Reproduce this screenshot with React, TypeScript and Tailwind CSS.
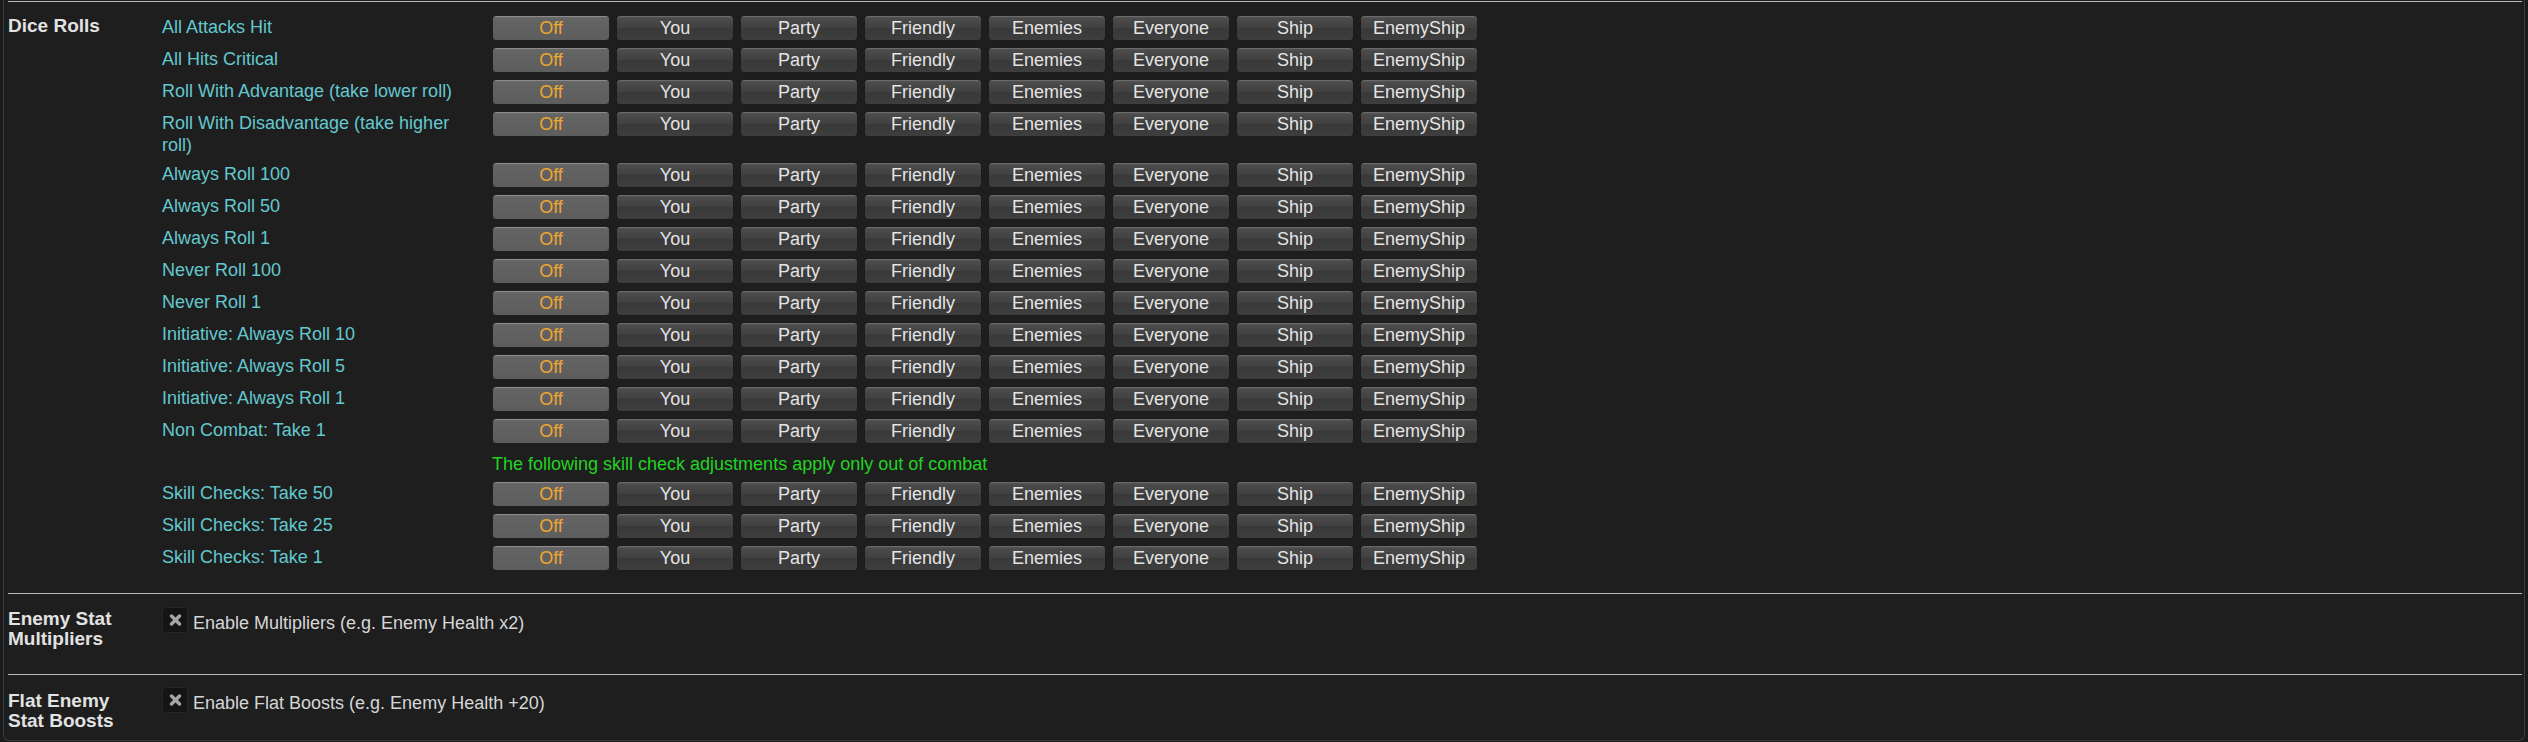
import React, { useState } from 'react';

const OPTIONS = ['Off', 'You', 'Party', 'Friendly', 'Enemies', 'Everyone', 'Ship', 'EnemyShip'];

const DICE_ROWS = [
    'All Attacks Hit',
    'All Hits Critical',
    'Roll With Advantage (take lower roll)',
    'Roll With Disadvantage (take higher roll)',
    'Always Roll 100',
    'Always Roll 50',
    'Always Roll 1',
    'Never Roll 100',
    'Never Roll 1',
    'Initiative: Always Roll 10',
    'Initiative: Always Roll 5',
    'Initiative: Always Roll 1',
    'Non Combat: Take 1',
];

const SKILL_ROWS = ['Skill Checks: Take 50', 'Skill Checks: Take 25', 'Skill Checks: Take 1'];

const Divider: React.FC = () => <div className="ml-[4px] mr-[2px] h-px bg-[#bababa]" />;

const ToggleRow: React.FC<{ label: string; value: string; onChange: (v: string) => void }> = ({ label, value, onChange }) => (
    <div className="flex">
        <div className="w-[330px] shrink-0 pr-[20px] pt-[4px] pb-[3px] text-[18px] leading-[22px] text-[#63c8ce]">{label}</div>
        <div className="flex gap-[6px] py-[3px] items-start">
            {OPTIONS.map(opt => {
                const active = opt === value;
                return (
                    <button
                        key={opt}
                        onClick={() => onChange(opt)}
                        className={
                            active
                                ? 'w-[118px] h-[26px] rounded-[4px] border border-[#202020] bg-[linear-gradient(to_bottom,#707070_0%,#646464_10%,#5d5d5d_100%)] shadow-[inset_0_1px_0_#8c8c8c] text-[18px] leading-[24px] text-[#efa631] text-center'
                                : 'w-[118px] h-[26px] rounded-[4px] border border-[#1c1c1c] bg-[linear-gradient(to_bottom,#5e5e5e_0%,#4b4b4b_10%,#414141_48%,#393939_52%,#3e3e3e_100%)] shadow-[inset_0_1px_0_#6a6a6a] text-[18px] leading-[24px] text-[#e4e4e4] text-center'
                        }
                    >
                        {opt}
                    </button>
                );
            })}
        </div>
    </div>
);

const CheckOption: React.FC<{ heading: string; label: string; pt: string; hpt: string }> = ({ heading, label, pt, hpt }) => {
    const [checked, setChecked] = useState(false);
    return (
        <section className={`flex ${pt}`}>
            <h3 className={`w-[158px] shrink-0 pl-[4px] pr-[24px] ${hpt} text-[19px] leading-[20px] font-bold text-[#e2e2e2]`}>{heading}</h3>
            <label className="flex items-start gap-[5px] cursor-pointer" onClick={() => setChecked(c => !c)}>
                <span className="w-[26px] h-[26px] shrink-0 rounded-[4px] bg-[#141414] border border-[#262626] flex items-center justify-center">
                    <svg width="13" height="12" viewBox="0 0 13 12">
                        <path d="M2.5 2 L10.5 10 M10.5 2 L2.5 10" stroke={checked ? '#e4e4e4' : '#a6a6a6'} strokeWidth="3.4" strokeLinecap="round" />
                    </svg>
                </span>
                <span className="pt-[5px] text-[18px] leading-[22px] text-[#d6d6d6]">{label}</span>
            </label>
        </section>
    );
};

const App: React.FC = () => {
    const [dice, setDice] = useState<Record<string, string>>({});
    const set = (k: string) => (v: string) => setDice(d => ({ ...d, [k]: v }));

    return (
        <div className="min-h-screen bg-[#1b1b1b] font-['Liberation_Sans',Arial,sans-serif]">
            <div className="mx-[3px] bg-[#1e1e1e] border-x border-b border-[#3a3a3a] rounded-b-[6px]">
                <div className="pt-px">
                    <Divider />
                </div>

                <section className="flex pt-[10px] pb-[19px]">
                    <h3 className="w-[158px] shrink-0 pl-[4px] pr-[24px] pt-[4px] text-[19px] leading-[20px] font-bold text-[#e2e2e2]">Dice Rolls</h3>
                    <div className="flex flex-col">
                        {DICE_ROWS.map(r => (
                            <ToggleRow key={r} label={r} value={dice[r] ?? 'Off'} onChange={set(r)} />
                        ))}
                        <div className="flex">
                            <div className="w-[330px] shrink-0" />
                            <p className="pt-[6px] pb-[3px] text-[18px] leading-[22px] text-[#22d422]">
                                The following skill check adjustments apply only out of combat
                            </p>
                        </div>
                        {SKILL_ROWS.map(r => (
                            <ToggleRow key={r} label={r} value={dice[r] ?? 'Off'} onChange={set(r)} />
                        ))}
                    </div>
                </section>

                <Divider />
                <div className="h-[80px]">
                    <CheckOption heading="Enemy Stat Multipliers" label="Enable Multipliers (e.g. Enemy Health x2)" pt="pt-[13px]" hpt="pt-[2px]" />
                </div>

                <Divider />
                <div className="h-[65px]">
                    <CheckOption heading="Flat Enemy Stat Boosts" label="Enable Flat Boosts (e.g. Enemy Health +20)" pt="pt-[12px]" hpt="pt-[4px]" />
                </div>
            </div>
        </div>
    );
};

export default App;
